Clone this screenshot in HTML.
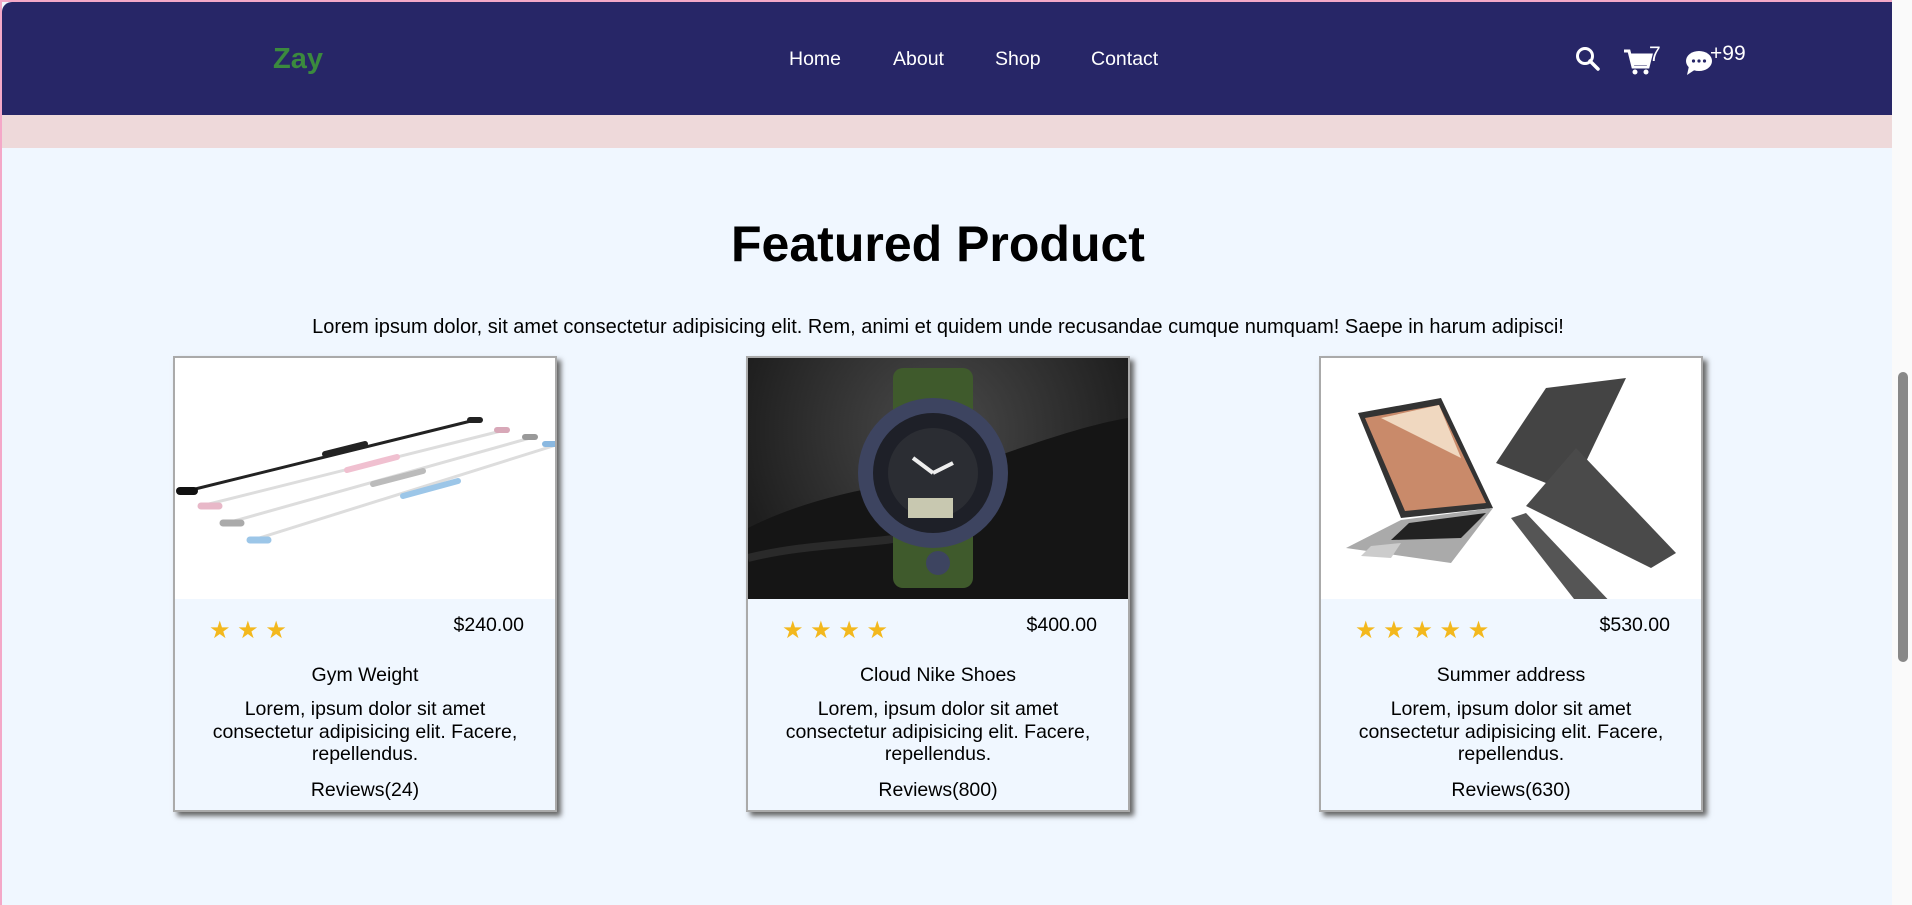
<!DOCTYPE html>
<html><head><meta charset="utf-8"><style>
*{margin:0;padding:0;box-sizing:border-box}
html,body{width:1912px;height:905px;overflow:hidden}
body{background:#f0f7ff;font-family:"Liberation Sans",Arial,sans-serif;position:relative}
.bl{position:absolute;left:0;top:0;width:2px;height:905px;background:#f4a8c8}
.bt{position:absolute;left:0;top:0;width:1912px;height:2px;background:#f4a8c8}
nav{position:absolute;left:2px;top:2px;width:1890px;height:113px;background:#272667;border-top-left-radius:10px}
.pink{position:absolute;left:2px;top:115px;width:1890px;height:33px;background:#eed9da}
.logo{position:absolute;left:271px;top:41px;color:#3b8a3e;font-weight:bold;font-size:29px}
.nl{position:absolute;top:46px;color:#fff;font-size:19.5px}
h1{position:absolute;left:0;width:1876px;top:215px;text-align:center;font-size:50px;font-weight:bold;color:#000}
.lead{position:absolute;left:0;width:1876px;top:316px;text-align:center;font-size:20px}
.card{position:absolute;top:356px;width:384px;height:456px;background:#f0f7ff;border:2px solid #aaa;box-shadow:4px 4px 5px #666}
.img{position:absolute;left:0;top:0;width:380px;height:241px;overflow:hidden}
.stars{position:absolute;left:34px;top:258px;display:flex;gap:4px}
.price{position:absolute;right:31px;top:256px;font-size:19.5px}
.name{position:absolute;left:0;width:100%;top:306px;text-align:center;font-size:19.5px}
.desc{position:absolute;left:20px;width:340px;top:340px;text-align:center;font-size:19.5px;line-height:22.5px}
.rev{position:absolute;left:0;width:100%;top:421px;text-align:center;font-size:19.5px}
.sb{position:absolute;right:0;top:0;width:20px;height:905px;background:#fafafa}
.th{position:absolute;right:4px;top:372px;width:10px;height:290px;background:#888;border-radius:5px}
</style></head><body>
<div class="bl"></div><div class="bt"></div>
<nav>
<div class="logo">Zay</div>
<div class="nl" style="left:787px">Home</div>
<div class="nl" style="left:891px">About</div>
<div class="nl" style="left:993px">Shop</div>
<div class="nl" style="left:1089px">Contact</div>
<svg style="position:absolute;left:1573px;top:44px" width="26" height="26" viewBox="0 0 26 26"><circle cx="10" cy="10" r="7.5" fill="none" stroke="#fff" stroke-width="3"/><path d="M15 15 L23 23" stroke="#fff" stroke-width="3.5" stroke-linecap="round"/></svg>
<svg style="position:absolute;left:1621px;top:46px" width="30" height="28" viewBox="0 0 30 28"><path d="M1 3 H6 L10 19 H25 L28 7 H8" fill="none" stroke="#fff" stroke-width="3"/><path d="M8 8 H27 L25 17 H10Z" fill="#fff"/><circle cx="12" cy="24" r="2.5" fill="#fff"/><circle cx="23" cy="24" r="2.5" fill="#fff"/></svg>
<div style="position:absolute;left:1647px;top:41px;color:#fff;font-size:21px">7</div>
<svg style="position:absolute;left:1683px;top:48px" width="28" height="26" viewBox="0 0 28 26"><ellipse cx="14" cy="11" rx="13" ry="10" fill="#fff"/><path d="M4 16 L2 25 L11 19Z" fill="#fff"/><circle cx="8.5" cy="11" r="1.6" fill="#272667"/><circle cx="14" cy="11" r="1.6" fill="#272667"/><circle cx="19.5" cy="11" r="1.6" fill="#272667"/></svg>
<div style="position:absolute;left:1708px;top:40px;color:#fff;font-size:21px">+99</div>
</nav>
<div class="pink"></div>
<h1>Featured Product</h1>
<div class="lead">Lorem ipsum dolor, sit amet consectetur adipisicing elit. Rem, animi et quidem unde recusandae cumque numquam! Saepe in harum adipisci!</div>

<div class="card" style="left:173px">
<div class="img" style="background:#fff"><svg width="380" height="241">
<g stroke-linecap="round">
<path d="M8 134 L300 62" stroke="#222" stroke-width="3"/><path d="M5 133 h14" stroke="#111" stroke-width="8"/><path d="M295 62 h10" stroke="#222" stroke-width="6"/><path d="M150 96 l40 -10" stroke="#222" stroke-width="6"/>
<path d="M30 147 L330 72" stroke="#ddd" stroke-width="3"/><path d="M26 148 h18" stroke="#e8b8c8" stroke-width="7"/><path d="M172 112 l50 -13" stroke="#f0c0d0" stroke-width="6"/><path d="M322 72 h10" stroke="#d8a8b8" stroke-width="6"/>
<path d="M52 165 L355 80" stroke="#ddd" stroke-width="3"/><path d="M48 165 h18" stroke="#aaa" stroke-width="7"/><path d="M198 126 l50 -13" stroke="#bbb" stroke-width="6"/><path d="M350 79 h10" stroke="#999" stroke-width="6"/>
<path d="M78 182 L378 88" stroke="#ddd" stroke-width="3"/><path d="M75 182 h18" stroke="#9cc6e8" stroke-width="7"/><path d="M228 138 l55 -15" stroke="#9cc6e8" stroke-width="6"/><path d="M370 86 h10" stroke="#8ab8e0" stroke-width="6"/>
</g></svg></div>
<div class="stars"><span style="color:#f3b81d;font-size:24px">★ ★ ★</span></div>
<div class="price">$240.00</div>
<div class="name">Gym Weight</div>
<div class="desc">Lorem, ipsum dolor sit amet consectetur adipisicing elit. Facere, repellendus.</div>
<div class="rev">Reviews(24)</div>
</div>

<div class="card" style="left:746px">
<div class="img" style="background:radial-gradient(circle at 50% 30%,#4a4a4a,#1e1e1e 80%)"><svg width="380" height="241">
<path d="M0 170 C60 140 120 130 180 120 C250 100 320 70 380 60 L380 241 L0 241Z" fill="#151515"/>
<path d="M0 200 C80 180 160 190 240 160" stroke="#2a2a2a" stroke-width="8" fill="none"/>
<rect x="145" y="10" width="80" height="220" rx="10" fill="#3f5a2c"/>
<circle cx="185" cy="115" r="75" fill="#3d4460"/>
<circle cx="185" cy="115" r="60" fill="#1e2028"/>
<circle cx="185" cy="115" r="45" fill="#2b2d33"/>
<rect x="160" y="140" width="45" height="20" fill="#c8c8b0"/>
<path d="M185 115 L165 100 M185 115 L205 105" stroke="#eee" stroke-width="4"/>
<circle cx="190" cy="205" r="12" fill="#3d4460"/>
</svg></div>
<div class="stars"><span style="color:#f3b81d;font-size:24px">★ ★ ★ ★</span></div>
<div class="price">$400.00</div>
<div class="name">Cloud Nike Shoes</div>
<div class="desc">Lorem, ipsum dolor sit amet consectetur adipisicing elit. Facere, repellendus.</div>
<div class="rev">Reviews(800)</div>
</div>

<div class="card" style="left:1319px">
<div class="img" style="background:#fff"><svg width="380" height="241">
<path d="M175 105 L225 30 L305 20 L250 135 Z" fill="#444"/>
<path d="M205 155 L295 250 L260 250 L190 160Z" fill="#555"/>
<path d="M205 148 L255 90 L355 195 L330 210Z" fill="#4a4a4a"/>
<path d="M37 55 L120 40 L172 150 L80 160Z" fill="#333"/>
<path d="M44 60 L118 47 L165 145 L84 153Z" fill="#c98a6a"/>
<path d="M60 60 L118 47 L140 100 Z" fill="#f0d8c0"/>
<path d="M80 162 L172 150 L130 205 L25 190Z" fill="#aaa"/>
<path d="M88 165 L165 155 L140 180 L70 182Z" fill="#222"/>
<path d="M50 188 L80 185 L70 200 L40 198Z" fill="#ccc"/>
</svg></div>
<div class="stars"><span style="color:#f3b81d;font-size:24px">★ ★ ★ ★ ★</span></div>
<div class="price">$530.00</div>
<div class="name">Summer address</div>
<div class="desc">Lorem, ipsum dolor sit amet consectetur adipisicing elit. Facere, repellendus.</div>
<div class="rev">Reviews(630)</div>
</div>

<div class="sb"><div class="th"></div></div>
</body></html>
